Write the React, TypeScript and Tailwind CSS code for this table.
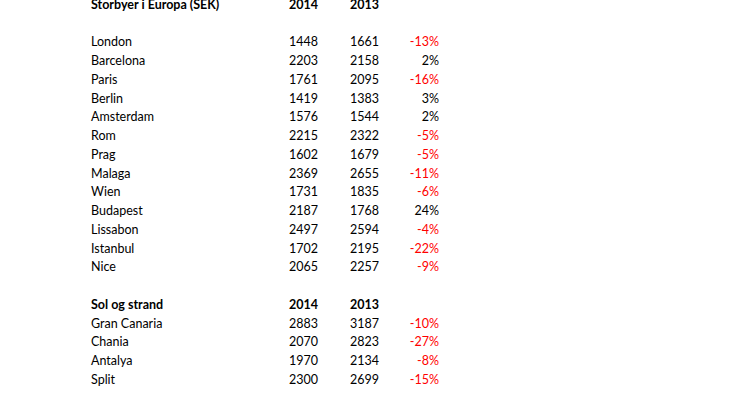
type Row = { city: string; y14: number; y13: number; pct: string }

const storbyer: Row[] = [
  { city: "London", y14: 1448, y13: 1661, pct: "-13%" },
  { city: "Barcelona", y14: 2203, y13: 2158, pct: "2%" },
  { city: "Paris", y14: 1761, y13: 2095, pct: "-16%" },
  { city: "Berlin", y14: 1419, y13: 1383, pct: "3%" },
  { city: "Amsterdam", y14: 1576, y13: 1544, pct: "2%" },
  { city: "Rom", y14: 2215, y13: 2322, pct: "-5%" },
  { city: "Prag", y14: 1602, y13: 1679, pct: "-5%" },
  { city: "Malaga", y14: 2369, y13: 2655, pct: "-11%" },
  { city: "Wien", y14: 1731, y13: 1835, pct: "-6%" },
  { city: "Budapest", y14: 2187, y13: 1768, pct: "24%" },
  { city: "Lissabon", y14: 2497, y13: 2594, pct: "-4%" },
  { city: "Istanbul", y14: 1702, y13: 2195, pct: "-22%" },
  { city: "Nice", y14: 2065, y13: 2257, pct: "-9%" },
]

const solOgStrand: Row[] = [
  { city: "Gran Canaria", y14: 2883, y13: 3187, pct: "-10%" },
  { city: "Chania", y14: 2070, y13: 2823, pct: "-27%" },
  { city: "Antalya", y14: 1970, y13: 2134, pct: "-8%" },
  { city: "Split", y14: 2300, y13: 2699, pct: "-15%" },
]

const cols = "grid grid-cols-[169px_58px_61px_60px] h-[18.75px] leading-[18.75px]"

function Header({ title }: { title: string }) {
  return (
    <div className={`${cols} font-bold`}>
      <div>{title}</div>
      <div className="text-right">2014</div>
      <div className="text-right">2013</div>
      <div />
    </div>
  )
}

function DataRow({ row }: { row: Row }) {
  const negative = row.pct.startsWith("-")
  return (
    <div className={cols}>
      <div>{row.city}</div>
      <div className="text-right">{row.y14}</div>
      <div className="text-right">{row.y13}</div>
      <div className={`text-right ${negative ? "text-[#ff0000]" : ""}`}>{row.pct}</div>
    </div>
  )
}

export default function App() {
  return (
    <div className="w-[746px] h-[419px] overflow-hidden bg-white text-black">
      <div className="-mt-[4.2px] pl-[91px] text-[12.5px] font-['Lato',sans-serif]">
        <Header title="Storbyer i Europa (SEK)" />
        <div className="h-[18.75px]" />
        {storbyer.map((r) => (
          <DataRow key={r.city} row={r} />
        ))}
        <div className="h-[18.75px]" />
        <Header title="Sol og strand" />
        {solOgStrand.map((r) => (
          <DataRow key={r.city} row={r} />
        ))}
      </div>
    </div>
  )
}
